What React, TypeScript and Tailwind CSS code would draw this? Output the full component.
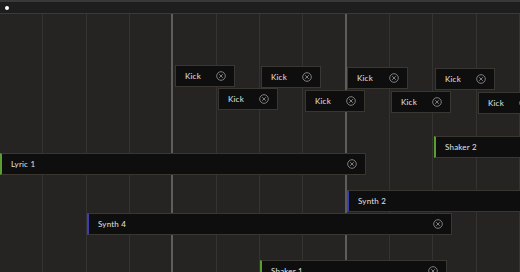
import React from "react";

type Clip = { label: string; x: number; y: number; w: number; accent?: "green" | "blue" };

const clips: Clip[] = [
  { label: "Kick", x: 175, y: 65, w: 60 },
  { label: "Kick", x: 218, y: 88, w: 60 },
  { label: "Kick", x: 261, y: 66, w: 60 },
  { label: "Kick", x: 305, y: 90, w: 60 },
  { label: "Kick", x: 347, y: 67, w: 61 },
  { label: "Kick", x: 391, y: 91, w: 60 },
  { label: "Kick", x: 435, y: 68, w: 60 },
  { label: "Kick", x: 478, y: 92, w: 60 },
  { label: "Shaker 2", x: 434, y: 136, w: 120, accent: "green" },
  { label: "Lyric 1", x: 0, y: 153, w: 366, accent: "green" },
  { label: "Synth 2", x: 347, y: 190, w: 200, accent: "blue" },
  { label: "Synth 4", x: 87, y: 213, w: 365, accent: "blue" },
  { label: "Shaker 1", x: 260, y: 260, w: 187, accent: "green" },
];

function CloseIcon() {
  return (
    <svg width="10" height="10" viewBox="0 0 10 10" fill="none" className="shrink-0">
      <circle cx="5" cy="5" r="4.3" stroke="#8a8a8a" strokeWidth="0.9" />
      <path d="M3.5 3.5 L6.5 6.5 M6.5 3.5 L3.5 6.5" stroke="#8a8a8a" strokeWidth="0.9" strokeLinecap="round" />
    </svg>
  );
}

export default function App() {
  const cols = Array.from({ length: 12 }, (_, i) => i);
  return (
    <div
      className="relative w-[520px] h-[272px] overflow-hidden bg-[#252422] flex flex-col"
      style={{ fontFamily: "Lato, 'Noto Sans', sans-serif" }}
    >
      <div className="h-[2px] bg-[#393939] shrink-0" />
      <div className="h-[11px] bg-[#1e1e1e] flex items-center pl-[5px] shrink-0">
        <div className="w-[4px] h-[4px] rounded-full bg-white" />
      </div>
      <div className="h-[1px] bg-[#3a3a3a] shrink-0" />
      <div className="flex-1 grid grid-cols-12">
        {cols.map((i) => (
          <div
            key={i}
            className={
              i === 3 || i === 7
                ? "border-r-2 border-[#5e5d5b]"
                : "border-r border-[#353331]"
            }
          />
        ))}
      </div>
      <div className="absolute inset-0">
        {clips.map((c, idx) => (
          <div
            key={idx}
            className={
              "absolute h-[22px] bg-[#0e0e0e] border border-[#3a3632] flex items-center justify-between pl-[9px] pr-[8px] " +
              (c.accent === "green"
                ? "border-l-2 border-l-[#5a9e32]"
                : c.accent === "blue"
                ? "border-l-2 border-l-[#3c40a8]"
                : "")
            }
            style={{ left: c.x, top: c.y, width: c.w }}
          >
            <span className="text-[8px] leading-none text-[#e2e2e2] font-normal tracking-[0.2px]">
              {c.label}
            </span>
            <CloseIcon />
          </div>
        ))}
      </div>
    </div>
  );
}
